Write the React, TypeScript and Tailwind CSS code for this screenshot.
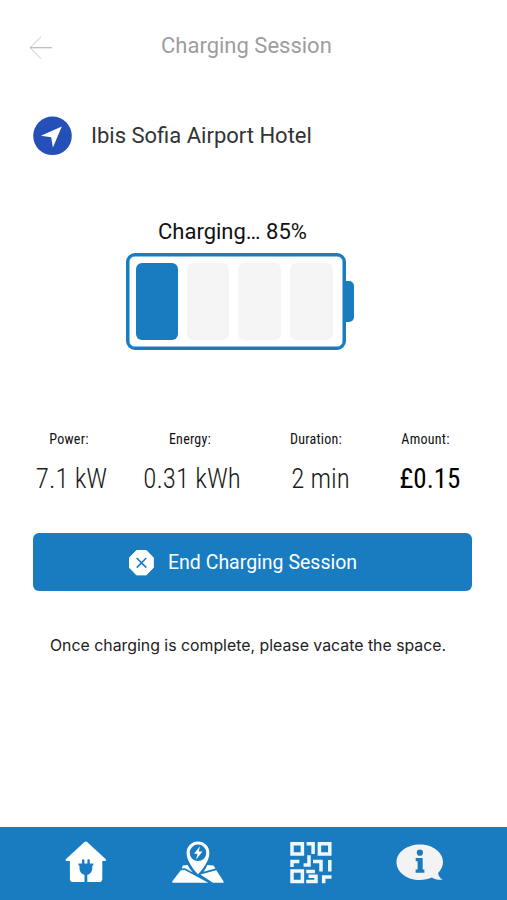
const stats = [
  { label: "Power:", value: "7.1 kW", width: "w-[104px]", style: "pl-px font-light text-[#1c1c1c]" },
  { label: "Energy:", value: "0.31 kWh", width: "w-[138px]", style: "font-light text-[#1c1c1c]" },
  { label: "Duration:", value: "2 min", width: "w-[114px]", style: "pl-[5px] font-light text-[#1c1c1c]" },
  { label: "Amount:", value: "£0.15", width: "w-[105px]", style: "pl-[5px] font-normal text-black" },
];

function BackArrow() {
  return (
    <svg width="24" height="24" viewBox="0 0 24 24" fill="none" stroke="#b8b8b8">
      <path d="M12 .8 1 11.700l11 11" strokeWidth="0.8" />
      <path d="M1 11.700h22" strokeWidth="1.200" />
    </svg>
  );
}

function LocationBadge() {
  return (
    <svg width="40" height="40" viewBox="0 0 40 40">
      <circle cx="20.500" cy="19.800" r="19.300" fill="#2450b8" />
      <path d="M29.800 10.600 8.900 19.800l10.300 1.400 1.700 10.400z" fill="#fff" />
    </svg>
  );
}

function HomeIcon() {
  return (
    <svg width="42" height="42" viewBox="0 0 42 42">
      <path
        d="M20.800.4c.5 0 .9.200 1.300.6l18.500 17.100c1 .9.500 1.900-.7 1.900h-2.600v18c0 1.900-1.200 3.100-3.100 3.100H8c-1.900 0-3.100-1.200-3.100-3.100V20H1.700C.5 20 0 19 1 18.100L19.500 1c.4-.4.8-.6 1.300-.6z"
        fill="#fff"
      />
      <path
        d="M18.200 18.200c.7 0 1.200.5 1.200 1.200v3.100h3v-3.100c0-.7.5-1.200 1.200-1.200s1.200.5 1.200 1.200v3.100h3.500v2.100h-1v2.300c0 3.400-2 6.100-5 6.800V41h-2.800v-7.300c-3-.7-5-3.400-5-6.800v-2.300h-1v-2.100H17v-3.100c0-.7.5-1.200 1.200-1.200z"
        fill="#197cc1"
      />
    </svg>
  );
}

function MapIcon() {
  return (
    <svg width="52" height="42" viewBox="0 0 52 42" fill="#fff">
      <path d="M10.800 24.500 15.700 24c1.300 2.800 3.200 5.200 5.200 7.400L13 27.300l-3.200.1z" />
      <path d="M8.800 29.200 12.700 29 36.300 41.800H1.100c-.9 0-1.300-.5-.9-1.400z" />
      <path d="m35.300 24 6.300.5 1.800 2.900-11.800 3.300c1.500-2.100 2.700-4.300 3.700-6.700z" />
      <path d="m28.400 33.400 15.900-4.200 7.200 11.100c.5.900.1 1.500-.9 1.500H41z" />
      <path d="M26 .4c6.400 0 11.400 4.900 11.400 11.300 0 7.600-5.700 15.300-11.400 21.600-5.700-6.300-11.400-14-11.400-21.600C14.600 5.300 19.600.4 26 .4z" />
      <circle cx="26" cy="11.800" r="8.300" fill="#197cc1" />
      <path d="m28 5.300-6 7.500h3.500l-1.400 5.600 6.400-7.800h-3.800z" />
    </svg>
  );
}

function QrIcon() {
  return (
    <svg width="43" height="43" viewBox="0 0 43 43" fill="none" stroke="#f0f6fb" strokeWidth="3.500">
      <path d="M2 2.700h10.400v10.400H2zM29.400 2.700h10.400v10.400H29.400zM2 30.100h10.400v10.400H2z" />
      <path d="M16.600 2.700h6.500v10.200M2 26v-5.400h7.300M13.600 24h5.400v-9.800M23 20.600h8v9.800M39.800 18.900v11.500M16.200 30.400h8.700M16.200 40.500h9.800v-5.300h-7.500M33.700 42.300v-6.300h7.800" />
    </svg>
  );
}

function InfoIcon() {
  return (
    <svg width="48" height="38" viewBox="0 0 48 38">
      <path
        d="M23.800.4C36.700.4 47 8.200 47 18c0 4.100-1.800 7.900-4.900 10.900.4 3.200 2 5.200 4.600 6.900-4.500.3-8.100-.4-10.900-2.300-3.500 1.600-7.600 2.500-12 2.500C10.800 36 .5 28.100.5 18.200.5 8.300 10.800.4 23.800.4z"
        fill="#f3f3f3"
      />
      <circle cx="23.900" cy="8.700" r="3.100" fill="#197cc1" />
      <path d="M19.700 14h7v11.600h1.700v3.200h-8.800v-3.200h2V17.200h-1.900z" fill="#197cc1" />
    </svg>
  );
}

export default function App() {
  return (
    <div className="flex h-[900px] w-[507px] flex-col overflow-hidden bg-white font-['Roboto','Liberation_Sans',sans-serif] whitespace-nowrap">
      {/* Header */}
      <header className="flex h-[90px] items-center pl-[29px]">
        <button className="mt-[5px] w-6" aria-label="Back">
          <BackArrow />
        </button>
        <h1 className="ml-[108px] text-[22px] text-[#9d9d9d]">Charging Session</h1>
      </header>

      <section className="mt-[26px] flex h-10 items-center pl-[32px]">
        <LocationBadge />
        <h2 className="-mt-px ml-[19px] text-[22px] text-[#333]">Ibis Sofia Airport Hotel</h2>
      </section>

      {/* Battery */}
      <section className="mt-[59px] flex flex-col">
        <p className="ml-[158px] h-[34px] text-[22px] leading-[34px] text-[#111]">Charging… 85%</p>
        <div className="mt-[4px] ml-[126px] flex items-center">
          <div className="flex h-[97px] w-[220px] gap-[9px] rounded-[9px] border-[3px] border-[#197cc1] p-[7px] shadow-[inset_0_0_0_0.5px_#197cc1]">
            <span className="w-[42px] rounded-[6px] bg-[#197cc1]" />
            <span className="w-[42px] rounded-[6px] bg-[#f5f5f5]" />
            <span className="w-[43px] rounded-[6px] bg-[#f5f5f5]" />
            <span className="w-[43px] rounded-[6px] bg-[#f5f5f5]" />
          </div>
          <div className="h-[41px] w-[8px] rounded-r-[5px] bg-[#197cc1]" />
        </div>
      </section>

      {/* Session stats */}
      <section className="mt-[78px] flex pl-[19px] font-['Roboto_Condensed','Roboto',sans-serif] [font-stretch:75%]">
        {stats.map((s) => (
          <div key={s.label} className={`flex flex-col items-center ${s.width}`}>
            <span className="h-[22px] pr-1 text-[14px] leading-[22px] tracking-[0.25px] text-[#111]">{s.label}</span>
            <span className={`mt-[12px] text-[27px] leading-[34px] ${s.style}`}>{s.value}</span>
          </div>
        ))}
      </section>

      <button className="mt-[37px] ml-[33px] flex h-[58px] w-[439px] items-center rounded-[6px] bg-[#197cc1] pl-[95px] text-white">
        <svg width="27" height="27" viewBox="0 0 27 27">
          <path d="M8.500 1.500h9.800l7 7.200v10l-7 7.200H8.500l-7-7.200v-10z" fill="#fff" stroke="#fff" strokeLinejoin="round" />
          <path d="m8.700 9 9.600 9.600m0-9.600-9.600 9.600" stroke="#197cc1" strokeWidth="1.600" />
        </svg>
        <span className="mt-[2px] ml-[13px] text-[19.5px]">End Charging Session</span>
      </button>

      <p className="mt-[43px] ml-[50px] font-['Inter','Liberation_Sans',sans-serif] text-[15.85px] leading-6 text-[#222]">
        Once charging is complete, please vacate the space.
      </p>

      {/* Bottom navigation */}
      <nav className="mt-auto flex h-[73px] items-start bg-[#197cc1] pt-[14px] pl-[65px]">
        <a className="w-[107px]">
          <HomeIcon />
        </a>
        <a className="w-[118px]">
          <MapIcon />
        </a>
        <a className="w-[106px]">
          <QrIcon />
        </a>
        <a className="mt-[3px]">
          <InfoIcon />
        </a>
      </nav>
    </div>
  );
}
